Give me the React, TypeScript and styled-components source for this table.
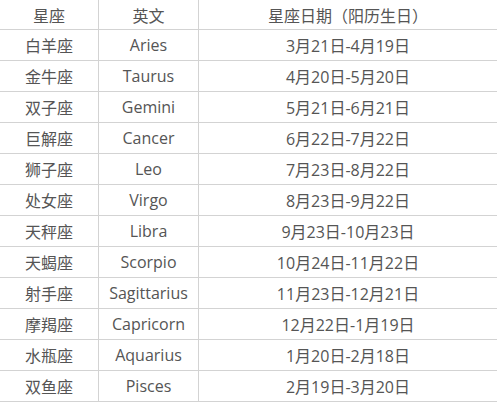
import React from 'react';
import styled, { createGlobalStyle } from 'styled-components';

const GlobalStyle = createGlobalStyle`
  body {
    margin: 0;
    background: #fff;
  }
`;

const Table = styled.div`
  width: 497px;
  font-family: "Open Sans", "Noto Sans CJK SC", sans-serif;
  font-size: 16px;
  color: #555;
`;

const Row = styled.div<{ $head?: boolean }>`
  display: grid;
  grid-template-columns: 99px 100px 1fr;
  height: ${(p) => (p.$head ? '29px' : '30px')};
  border-bottom: 1px solid #d3d3d3;
`;

const Cell = styled.div<{ $last?: boolean }>`
  display: flex;
  align-items: center;
  justify-content: center;
  border-right: ${(p) => (p.$last ? 'none' : '1px solid #d3d3d3')};
  white-space: nowrap;
`;

const signs: [string, string, string][] = [
  ['白羊座', 'Aries', '3月21日-4月19日'],
  ['金牛座', 'Taurus', '4月20日-5月20日'],
  ['双子座', 'Gemini', '5月21日-6月21日'],
  ['巨解座', 'Cancer', '6月22日-7月22日'],
  ['狮子座', 'Leo', '7月23日-8月22日'],
  ['处女座', 'Virgo', '8月23日-9月22日'],
  ['天秤座', 'Libra', '9月23日-10月23日'],
  ['天蝎座', 'Scorpio', '10月24日-11月22日'],
  ['射手座', 'Sagittarius', '11月23日-12月21日'],
  ['摩羯座', 'Capricorn', '12月22日-1月19日'],
  ['水瓶座', 'Aquarius', '1月20日-2月18日'],
  ['双鱼座', 'Pisces', '2月19日-3月20日'],
];

const App: React.FC = () => (
  <>
    <GlobalStyle />
    <Table>
      <Row $head>
        <Cell>星座</Cell>
        <Cell>英文</Cell>
        <Cell $last>星座日期（阳历生日）</Cell>
      </Row>
      {signs.map(([cn, en, date]) => (
        <Row key={en}>
          <Cell>{cn}</Cell>
          <Cell>{en}</Cell>
          <Cell $last>{date}</Cell>
        </Row>
      ))}
    </Table>
  </>
);

export default App;
